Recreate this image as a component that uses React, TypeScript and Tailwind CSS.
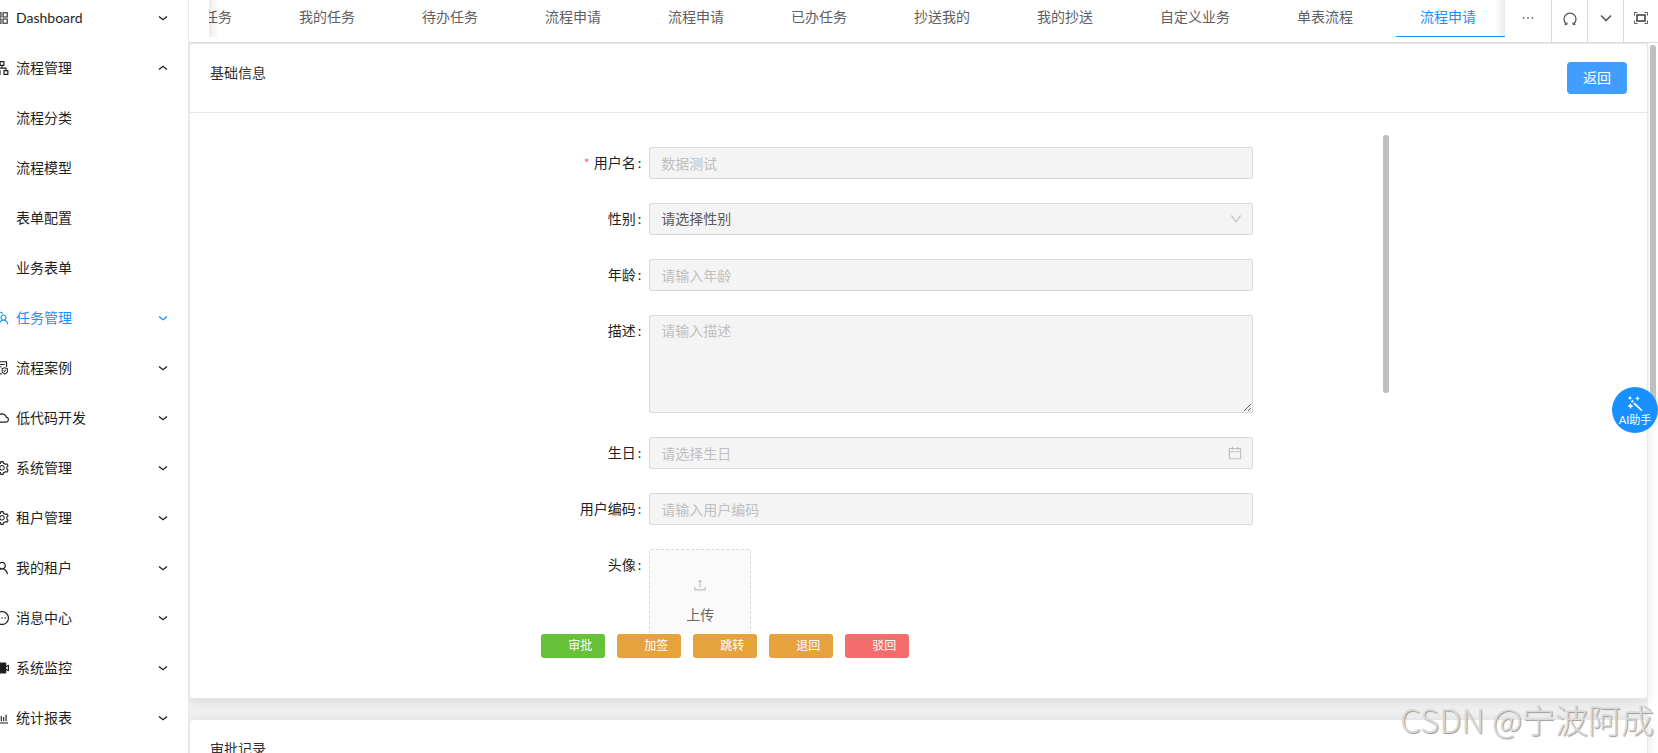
import type { ReactNode } from "react";
import type { IconType } from "react-icons";
import {
  AiFillVideoCamera,
  AiOutlineApartment,
  AiOutlineAppstore,
  AiOutlineBarChart,
  AiOutlineCalendar,
  AiOutlineCloud,
  AiOutlineDown,
  AiOutlineEllipsis,
  AiOutlineFileProtect,
  AiOutlineMessage,
  AiOutlineSetting,
  AiOutlineTeam,
  AiOutlineUpload,
  AiOutlineUser,
} from "react-icons/ai";

type MenuItem = {
  label: string;
  icon?: IconType;
  open?: boolean;
  active?: boolean;
};

const MENU: MenuItem[] = [
  { label: "Dashboard", icon: AiOutlineAppstore },
  { label: "流程管理", icon: AiOutlineApartment, open: true },
  { label: "流程分类" },
  { label: "流程模型" },
  { label: "表单配置" },
  { label: "业务表单" },
  { label: "任务管理", icon: AiOutlineTeam, active: true },
  { label: "流程案例", icon: AiOutlineFileProtect },
  { label: "低代码开发", icon: AiOutlineCloud },
  { label: "系统管理", icon: AiOutlineSetting },
  { label: "租户管理", icon: AiOutlineSetting },
  { label: "我的租户", icon: AiOutlineUser },
  { label: "消息中心", icon: AiOutlineMessage },
  { label: "系统监控", icon: AiFillVideoCamera },
  { label: "统计报表", icon: AiOutlineBarChart },
];

const TABS = [
  "任务",
  "我的任务",
  "待办任务",
  "流程申请",
  "流程申请",
  "已办任务",
  "抄送我的",
  "我的抄送",
  "自定义业务",
  "单表流程",
  "流程申请",
];

const ACTIONS = [
  { label: "审批", color: "bg-[#67c23a]" },
  { label: "加签", color: "bg-[#e6a23c]" },
  { label: "跳转", color: "bg-[#e6a23c]" },
  { label: "退回", color: "bg-[#e6a23c]" },
  { label: "驳回", color: "bg-[#f56c6c]" },
];

const FIELD =
  "block h-8 w-full rounded-xs border border-[#d9d9d9] bg-[#f4f4f4] px-[11px] text-sm placeholder:text-[#bfbfbf]";

function Arrow({ open }: { open?: boolean }) {
  return (
    <svg
      viewBox="0 0 10 10"
      className={open ? "size-2.5 rotate-180" : "size-2.5"}
      fill="none"
      stroke="currentColor"
      strokeWidth="1.4"
    >
      <path d="M1 3.5 5 6.7 9 3.5" />
    </svg>
  );
}

function Sidebar() {
  return (
    <nav className="w-[189px] shrink-0 overflow-hidden border-r border-[#e8e8e8] bg-white">
      <ul className="-ml-1.5 flex flex-col gap-[14px]">
        {MENU.map(({ label, icon: Icon, open, active }) => (
          <li key={label}>
            <button
              type="button"
              className={`flex h-9 w-full items-center gap-1.5 pr-5 text-left text-sm ${
                active ? "text-[#1890ff]" : "text-[#1f1f1f]"
              }`}
            >
              <span className="size-4 shrink-0">{Icon && <Icon className="size-4" />}</span>
              <span className="flex-1">{label}</span>
              {Icon && <Arrow open={open} />}
            </button>
          </li>
        ))}
      </ul>
    </nav>
  );
}

function ToolButton({ label, children }: { label: string; children: ReactNode }) {
  return (
    <button
      type="button"
      aria-label={label}
      className="flex w-9 items-center justify-center border-l border-[#d9d9d9] text-[#595959]"
    >
      {children}
    </button>
  );
}

function TabBar() {
  return (
    <header className="flex h-[43px] shrink-0 border-b border-[#d9dde2] bg-white pl-5 text-sm text-[#5f6062]">
      <div className="relative h-[37px] min-w-0 flex-1 overflow-hidden">
        <div className="flex h-full justify-end gap-[14px]">
          {TABS.map((tab, i) => (
            <button
              key={i}
              type="button"
              className={`h-full shrink-0 border-b pr-[29px] pb-0.5 pl-6 whitespace-nowrap ${
                i === TABS.length - 1 ? "border-[#1890ff] text-[#1890ff]" : "border-transparent"
              }`}
            >
              {tab}
            </button>
          ))}
        </div>
        <div className="absolute inset-y-0 left-0 w-2.5 bg-linear-to-r from-black/8 to-transparent" />
        <div className="absolute top-0 right-0 h-9 w-2.5 bg-linear-to-l from-black/8 to-transparent" />
      </div>
      <button type="button" aria-label="更多" className="flex h-9 w-[46px] items-center justify-center">
        <AiOutlineEllipsis className="size-4" />
      </button>
      <ToolButton label="刷新">
        <svg viewBox="0 0 14 14" className="mb-1 size-3.5" fill="none" stroke="currentColor" strokeWidth="1.3">
          <path d="M3.600 12.100A6 6 0 1 1 10.400 12.100" />
          <path d="M1.500 12.600h2.500v-2.300M12.500 12.600H10v-2.300" strokeWidth="1" />
        </svg>
      </ToolButton>
      <ToolButton label="展开">
        <svg viewBox="0 0 12 12" className="mb-1.5 size-3" fill="none" stroke="currentColor" strokeWidth="1.6">
          <path d="M1 3.5 6 8.5 11 3.5" />
        </svg>
      </ToolButton>
      <button
        type="button"
        aria-label="全屏"
        className="flex w-[35px] items-center justify-center border-l border-[#d9d9d9] text-[#595959]"
      >
        <svg viewBox="0 0 14 12" className="mb-1.5 h-3 w-3.5" fill="none" stroke="currentColor">
          <path d="M.5 3.5v-3h3M10.500.5h3v3M13.500 8.500v3h-3M3.500 11.500h-3v-3" />
          <rect x="3" y="3" width="8" height="6" strokeWidth="1.800" />
        </svg>
      </button>
    </header>
  );
}

function FormItem({
  id,
  label,
  required,
  children,
}: {
  id: string;
  label: string;
  required?: boolean;
  children: ReactNode;
}) {
  return (
    <div className="flex">
      <label htmlFor={id} className="w-[203px] shrink-0 pr-2 text-right text-sm leading-8 text-[#1f1f1f]">
        {required && <span className="mr-1 text-[#f56c6c]">*</span>}
        {label}
        <span className="ml-0.5">:</span>
      </label>
      <div className="relative min-w-0 flex-1">{children}</div>
    </div>
  );
}

function ApplyForm() {
  return (
    <div className="relative mx-auto h-[500px] w-2/3 overflow-hidden">
      <form className="flex flex-col gap-6 pt-[14px] pr-[138px]">
        <FormItem id="username" label="用户名" required>
          <input id="username" className={FIELD} placeholder="数据测试" disabled />
        </FormItem>
        <FormItem id="gender" label="性别">
          <select id="gender" className={`${FIELD} appearance-none text-[#595959] opacity-100`} disabled>
            <option>请选择性别</option>
          </select>
          <AiOutlineDown className="pointer-events-none absolute top-[9px] right-2.5 size-3.5 text-[#bfbfbf]" />
        </FormItem>
        <FormItem id="age" label="年龄">
          <input id="age" className={FIELD} placeholder="请输入年龄" disabled />
        </FormItem>
        <FormItem id="desc" label="描述">
          <textarea
            id="desc"
            className="block h-[98px] w-full resize-y rounded-xs border border-[#d9d9d9] bg-[#f4f4f4] px-[11px] py-1 text-sm leading-[22px] placeholder:text-[#bfbfbf]"
            placeholder="请输入描述"
            disabled
          />
        </FormItem>
        <FormItem id="birthday" label="生日">
          <input id="birthday" className={FIELD} placeholder="请选择生日" disabled />
          <AiOutlineCalendar className="pointer-events-none absolute top-2 right-2.5 size-4 text-[#bfbfbf]" />
        </FormItem>
        <FormItem id="usercode" label="用户编码">
          <input id="usercode" className={FIELD} placeholder="请输入用户编码" disabled />
        </FormItem>
        <FormItem id="avatar" label="头像">
          <button
            id="avatar"
            type="button"
            className="flex h-[104px] w-[102px] flex-col items-center justify-center gap-3 rounded-xs border border-dashed border-[#d9d9d9] bg-[#fafafa] text-sm text-[#666666]"
          >
            <AiOutlineUpload className="size-4 text-[#bfbfbf]" />
            上传
          </button>
        </FormItem>
      </form>
      <div className="absolute top-0.5 right-0.5 h-[258px] w-1.5 rounded-full bg-[#bfbfbf]" />
    </div>
  );
}

function Card({ title, extra, children }: { title: string; extra?: ReactNode; children?: ReactNode }) {
  return (
    <section className="shrink-0 rounded border border-[#e4e7ed] bg-white shadow-[0_2px_12px_rgba(0,0,0,0.1)]">
      <div className="flex items-start justify-between border-b border-[#e4e7ed] px-5 py-[18px]">
        <h2 className="text-sm leading-[22px] text-[#303133]">{title}</h2>
        {extra}
      </div>
      {children}
    </section>
  );
}

export default function App() {
  return (
    <div className="relative flex h-screen overflow-hidden bg-white font-['Lato','Noto_Sans_CJK_SC',sans-serif]">
      <Sidebar />
      <div className="flex min-w-0 flex-1 flex-col">
        <TabBar />
        <main className="relative min-h-0 flex-1 overflow-hidden pr-2.5">
          <div className="flex flex-col gap-5 bg-[#f0f0f0]">
            <Card
              title="基础信息"
              extra={
                <button type="button" className="h-8 rounded bg-[#409eff] px-4 text-sm text-white">
                  返回
                </button>
              }
            >
              <div className="px-5 pt-5 pb-10">
                <ApplyForm />
                <div className="mx-auto mt-px flex w-2/3 gap-3 pl-[95px]">
                  {ACTIONS.map(({ label, color }) => (
                    <button
                      key={label}
                      type="button"
                      className={`h-6 w-16 rounded-[3px] pr-[13px] text-right text-xs text-white ${color}`}
                    >
                      {label}
                    </button>
                  ))}
                </div>
              </div>
            </Card>
            <Card title="审批记录" />
          </div>
          <div className="absolute top-0.5 right-0.5 h-[360px] w-1.5 rounded-full bg-[#bfbfbf]" />
        </main>
      </div>

      <button
        type="button"
        className="absolute top-[387px] right-0 flex size-[46px] flex-col items-center justify-center rounded-full bg-[#1890ff] pt-1 text-[11px] leading-4 whitespace-nowrap text-white"
      >
        <svg viewBox="0 0 16 16" className="size-4" fill="currentColor">
          <path d="M7.500 6.500 15.500 14 14.300 15.200 6.400 7.700Z" />
          <path d="M3 0l.7 1.300L5 2l-1.300.7L3 4l-.7-1.300L1 2l1.300-.7ZM10.500 0l.8 1.700 1.700.8-1.700.8-.8 1.700-.8-1.700L8 2.500l1.700-.8ZM5.300 3.500l.6 1.200 1.200.6-1.200.6-.6 1.200-.6-1.200-1.200-.6 1.200-.6ZM3.500 7l1 2 2 1-2 1-1 2-1-2-2-1 2-1Z" />
        </svg>
        AI助手
      </button>
      <div className="pointer-events-none absolute right-1 bottom-2.5 font-['Noto_Sans_CJK_SC',sans-serif] text-[33px] leading-[48px] font-light whitespace-nowrap text-[#d9d9d9] [text-shadow:1px_1px_1px_#999999]">
        CSDN @宁波阿成
      </div>
    </div>
  );
}
